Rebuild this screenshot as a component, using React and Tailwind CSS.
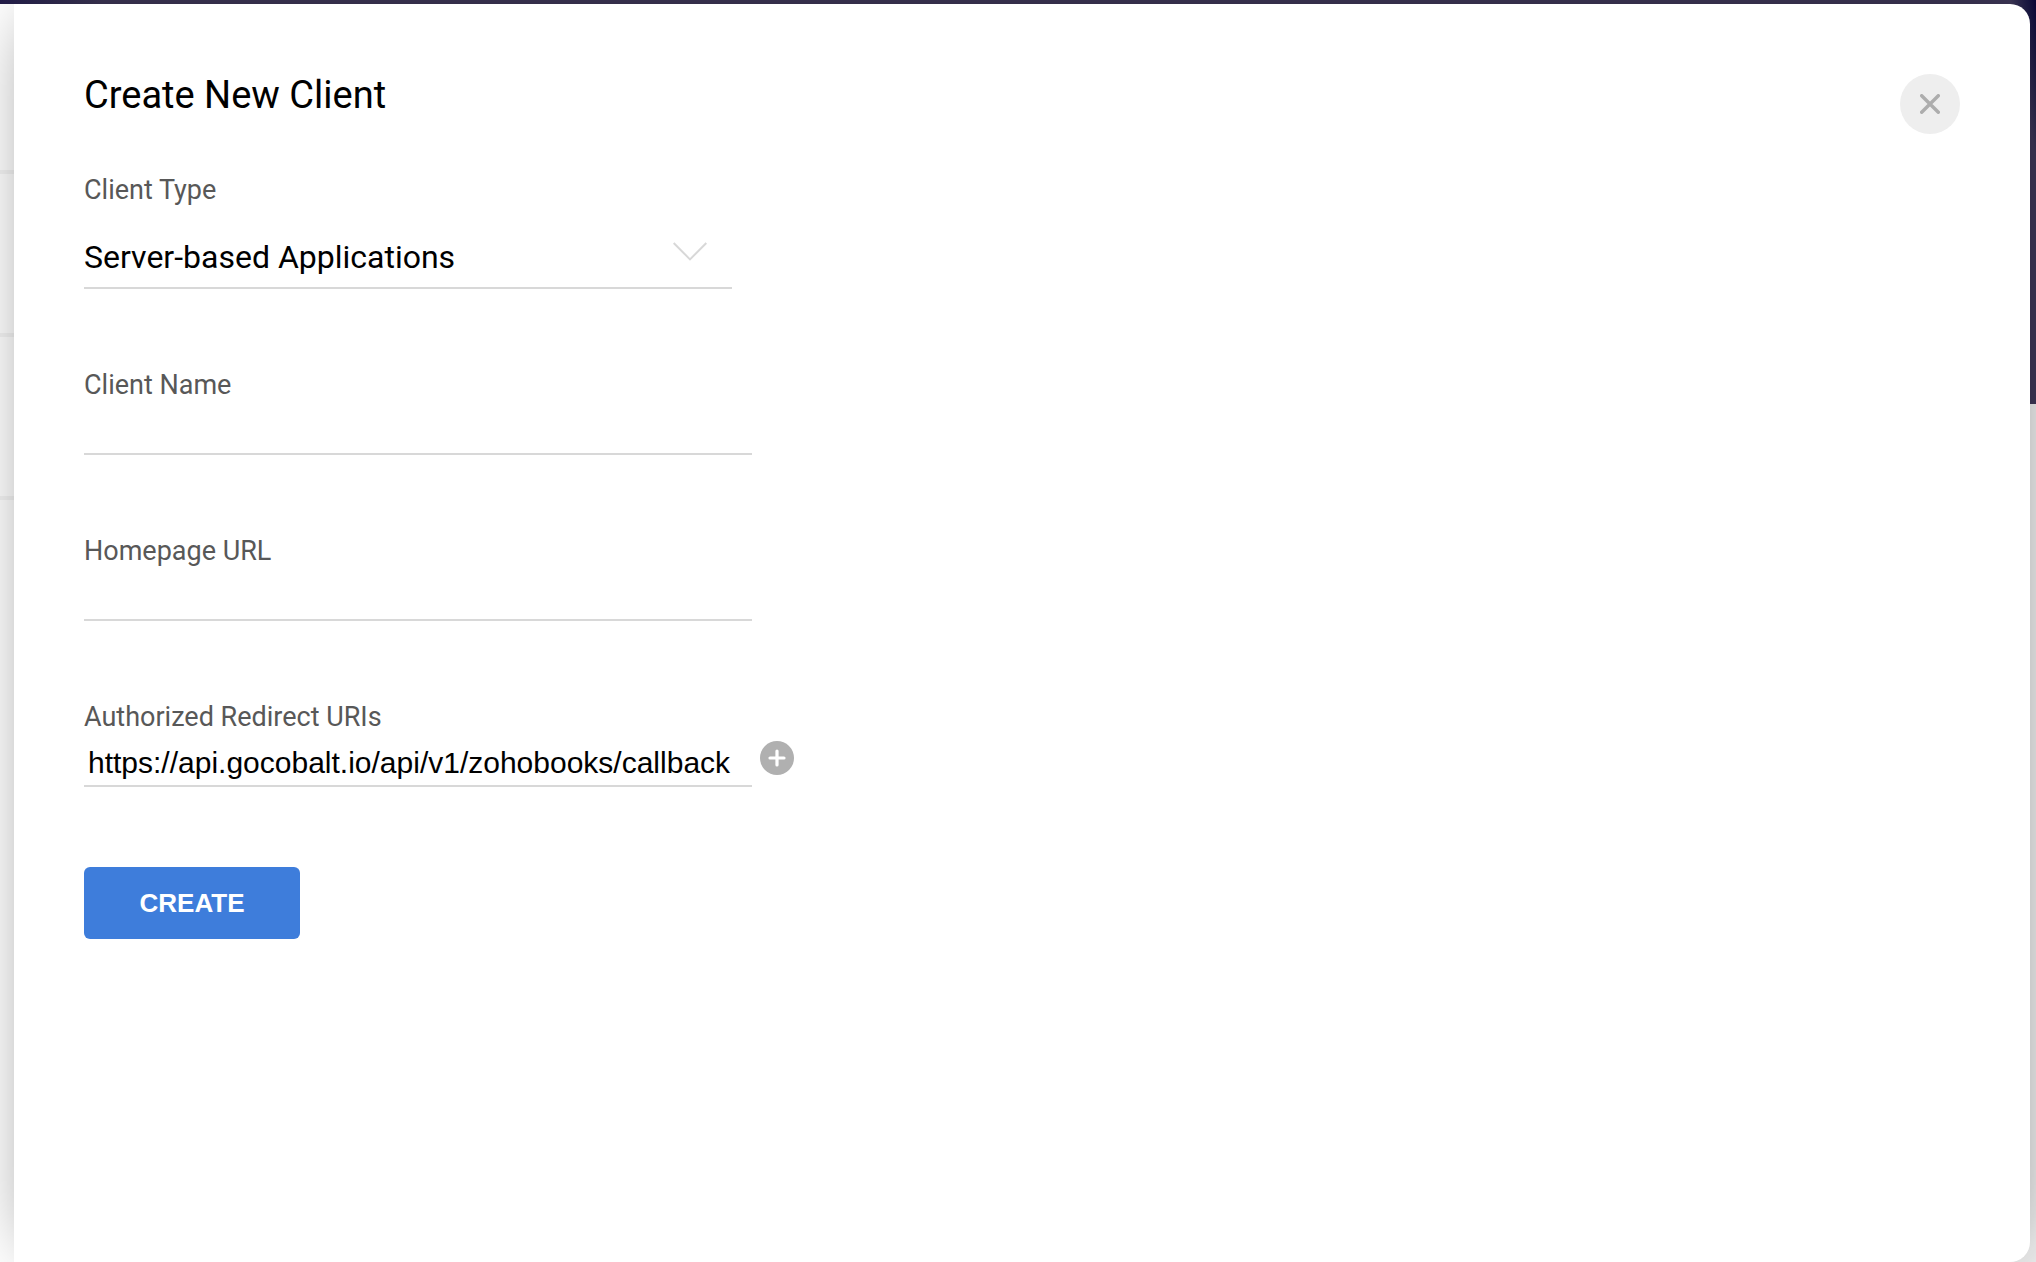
import { useState } from "react";

const labelClass = "block text-[27px] leading-8 text-[#585858]";
const inputClass =
  "block h-[54px] w-full max-w-[668px] border-b-2 border-[#d8d8d8] bg-transparent px-1 pt-2 text-black outline-none font-['Liberation_Sans',Arial,sans-serif] text-[30px] leading-9";

function Backdrop() {
  return (
    <div className="absolute inset-0 overflow-hidden bg-[#ededed]" aria-hidden="true">
      <div className="h-[404px] bg-linear-to-r from-[#221c48] via-[#3d3656] via-5% to-[#3d3656] pl-5">
        <div className="ml-auto h-full w-16 bg-linear-to-bl from-[#0b0638] via-[#3d3656] via-20% to-[#3d3656]" />
      </div>
      <div className="absolute top-1 bottom-0 left-0 w-1/2 bg-white">
        <div className="h-[170px] border-b-4 border-[#f4f4f4]" />
        <div className="h-[163px] border-b-4 border-[#f4f4f4]" />
        <div className="h-[163px] border-b-4 border-[#f4f4f4]" />
      </div>
    </div>
  );
}

function TextField({ id, label, value, onChange, children }) {
  return (
    <div className="mt-20">
      <label htmlFor={id} className={labelClass}>
        {label}
      </label>
      <div className="flex items-center gap-2">
        <input id={id} type="text" value={value} onChange={(e) => onChange(e.target.value)} className={inputClass} />
        {children}
      </div>
    </div>
  );
}

export default function App() {
  const [name, setName] = useState("");
  const [homepage, setHomepage] = useState("");
  const [uri, setUri] = useState("https://api.gocobalt.io/api/v1/zohobooks/callback");

  return (
    <div className="relative min-h-screen overflow-hidden pt-1 pr-1.5 pl-3.5 font-[Roboto,sans-serif]">
      <Backdrop />
      <main
        role="dialog"
        aria-labelledby="title"
        className="relative min-h-[calc(100vh-4px)] rounded-r-[20px] bg-white px-[70px] pt-[70px] pb-16 shadow-[0_0_66px_-20px_rgba(0,0,0,0.5)]"
      >
        <header className="flex items-start justify-between">
          <h1 id="title" className="text-[38px] leading-[42px] text-black">
            Create New Client
          </h1>
          <button
            type="button"
            aria-label="Close"
            className="flex size-[60px] items-center justify-center rounded-full bg-[#eeeeee]"
          >
            <svg viewBox="0 0 20 20" className="size-5" fill="none" stroke="#adadad" strokeWidth="3.4" strokeLinecap="round">
              <path d="M1.700 1.700l16.600 16.600M18.300 1.700l-16.600 16.600" />
            </svg>
          </button>
        </header>

        <form onSubmit={(e) => e.preventDefault()} className="pt-10">
          <div className="max-w-[648px]">
            <label htmlFor="type" className={labelClass}>
              Client Type
            </label>
            <div className="relative mt-5">
              <select
                id="type"
                className="block h-[63px] w-full appearance-none border-b-2 border-[#d8d8d8] bg-transparent text-[32px] text-black outline-none"
              >
                <option>Server-based Applications</option>
              </select>
              <svg
                viewBox="0 0 34 19"
                className="pointer-events-none absolute top-4 right-[25px] h-[19px] w-[34px]"
                fill="none"
                stroke="#d8d8d8"
                strokeWidth="2"
              >
                <path d="M.7 1l16.3 16.4L33.300 1" />
              </svg>
            </div>
          </div>

          <TextField id="name" label="Client Name" value={name} onChange={setName} />
          <TextField id="home" label="Homepage URL" value={homepage} onChange={setHomepage} />
          <TextField id="uri" label="Authorized Redirect URIs" value={uri} onChange={setUri}>
            <button
              type="button"
              aria-label="Add redirect URI"
              className="mb-1 flex size-[34px] shrink-0 items-center justify-center rounded-full bg-[#b0b0b0]"
            >
              <svg viewBox="0 0 18 18" className="size-[18px]" fill="none" stroke="white" strokeWidth="3.200" strokeLinecap="round">
                <path d="M9 2v14M2 9h14" />
              </svg>
            </button>
          </TextField>

          <button
            type="submit"
            className="mt-20 h-[72px] w-[216px] rounded-md bg-[#3e7ddb] font-['Liberation_Sans',Arial,sans-serif] text-[26px] leading-8 font-bold text-white"
          >
            CREATE
          </button>
        </form>
      </main>
    </div>
  );
}
